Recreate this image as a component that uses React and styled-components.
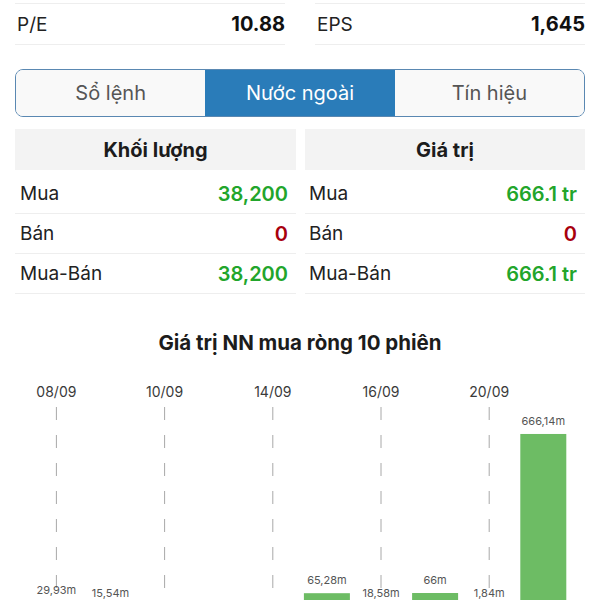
import React from "react";
import styled, { createGlobalStyle } from "styled-components";

const GlobalStyle = createGlobalStyle`
  html, body {
    margin: 0;
    padding: 0;
    background: #ffffff;
    font-family: Inter, "Noto Sans", "Liberation Sans", sans-serif;
    color: #222222;
  }
`;

const Page = styled.div`
  width: 600px;
  height: 600px;
  overflow: hidden;
  padding: 3px 15px 0;
  box-sizing: border-box;
`;

const StatsRow = styled.div`
  display: grid;
  grid-template-columns: 270px 270px;
  column-gap: 30px;
`;

const StatCell = styled.div`
  display: flex;
  align-items: center;
  justify-content: space-between;
  height: 40px;
  padding: 0 0 0 2px;
  border-top: 1px solid #eeeeee;
  border-bottom: 1px solid #eeeeee;
  font-size: 19px;
`;

const StatValue = styled.span`
  font-weight: 700;
  font-size: 20px;
  color: #111111;
`;

const Tabs = styled.div`
  display: grid;
  grid-template-columns: repeat(3, 1fr);
  height: 48px;
  margin-top: 24px;
  border: 1.5px solid #5a88b2;
  border-radius: 8px;
  overflow: hidden;
  box-sizing: border-box;
`;

const Tab = styled.div`
  display: flex;
  align-items: center;
  justify-content: center;
  font-size: 20px;
  color: ${props => (props.active ? "#ffffff" : "#555555")};
  background: ${props => (props.active ? "#2a7cb9" : "#f9f9f9")};
`;

const Tables = styled.div`
  display: grid;
  grid-template-columns: 281px 280px;
  column-gap: 9px;
  margin-top: 12px;
`;

const TableHeader = styled.div`
  display: flex;
  align-items: center;
  justify-content: center;
  height: 41px;
  margin-bottom: 4px;
  background: #f3f3f3;
  font-size: 20px;
  font-weight: 700;
  color: #1c1c1c;
`;

const TableRow = styled.div`
  display: flex;
  align-items: center;
  justify-content: space-between;
  height: 40px;
  padding: 0 8px 0 ${props => props.padLeft || 5}px;
  border-bottom: 1px solid #eeeeee;
  box-sizing: border-box;
  font-size: 19px;
`;

const RowValue = styled.span`
  font-weight: 600;
  font-size: 20px;
  color: ${props => (props.negative ? "#a8000c" : "#22a52b")};
`;

const ChartTitle = styled.div`
  margin-top: 37px;
  text-align: center;
  font-size: 20.5px;
  line-height: 24px;
  font-weight: 700;
  color: #1c1c1c;
`;

const ChartSvg = styled.svg`
  display: block;
  margin-top: 6px;
`;

const stats = [
  { label: "P/E", value: "10.88" },
  { label: "EPS", value: "1,645" }
];

const tables = [
  {
    title: "Khối lượng",
    padLeft: 5,
    rows: [
      { label: "Mua", value: "38,200" },
      { label: "Bán", value: "0", negative: true },
      { label: "Mua-Bán", value: "38,200" }
    ]
  },
  {
    title: "Giá trị",
    padLeft: 4,
    rows: [
      { label: "Mua", value: "666.1 tr" },
      { label: "Bán", value: "0", negative: true },
      { label: "Mua-Bán", value: "666.1 tr" }
    ]
  }
];

// sessions without a value draw nothing above the baseline
const sessions = [
  { date: "08/09", value: 29.93 },
  { date: "09/09", value: 15.54 },
  { date: "10/09", value: null },
  { date: "13/09", value: null },
  { date: "14/09", value: null },
  { date: "15/09", value: 65.28 },
  { date: "16/09", value: 18.58 },
  { date: "17/09", value: 66 },
  { date: "20/09", value: 1.84 },
  { date: "21/09", value: 666.14 }
];

const formatValue = v =>
  `${String(Math.round(v * 100) / 100).replace(".", ",")}m`;

const NetBuyChart = () => {
  const step = 54.1;
  const firstX = 41.4;
  const baseline = 249.5;
  const scale = 0.265;
  const barWidth = 46;

  return (
    <ChartSvg width="570" height="240" viewBox="0 0 570 240">
      {sessions.map((s, i) => {
        if (i % 2) return null;
        const x = firstX + step * i;
        return (
          <g key={s.date}>
            <text
              x={x}
              y={32}
              textAnchor="middle"
              dominantBaseline="middle"
              fontSize="14"
              fill="#3a3a3a"
              fontFamily="Inter, sans-serif"
            >
              {s.date}
            </text>
            <line
              x1={x}
              x2={x}
              y1={46}
              y2={240}
              stroke="#a8a8a8"
              strokeWidth="1"
              strokeDasharray="13 15"
            />
          </g>
        );
      })}
      {sessions.map((s, i) => {
        if (s.value == null) return null;
        const x = firstX + step * i;
        const h = s.value * scale;
        const top = baseline - h;
        return (
          <g key={`bar-${s.date}`}>
            <rect
              x={x - barWidth / 2}
              y={top}
              width={barWidth}
              height={h}
              fill="#6dbc64"
            />
            <text
              x={x}
              y={Math.min(top - 12, 233)}
              textAnchor="middle"
              dominantBaseline="middle"
              fontSize="11"
              fill="#555555"
              fontFamily="Inter, sans-serif"
            >
              {formatValue(s.value)}
            </text>
          </g>
        );
      })}
    </ChartSvg>
  );
};

const App = () => (
  <Page>
    <GlobalStyle />
    <StatsRow>
      {stats.map(s => (
        <StatCell key={s.label}>
          <span>{s.label}</span>
          <StatValue>{s.value}</StatValue>
        </StatCell>
      ))}
    </StatsRow>
    <Tabs>
      <Tab>Sổ lệnh</Tab>
      <Tab active>Nước ngoài</Tab>
      <Tab>Tín hiệu</Tab>
    </Tabs>
    <Tables>
      {tables.map(t => (
        <div key={t.title}>
          <TableHeader>{t.title}</TableHeader>
          {t.rows.map(r => (
            <TableRow key={r.label} padLeft={t.padLeft}>
              <span>{r.label}</span>
              <RowValue negative={r.negative}>{r.value}</RowValue>
            </TableRow>
          ))}
        </div>
      ))}
    </Tables>
    <ChartTitle>Giá trị NN mua ròng 10 phiên</ChartTitle>
    <NetBuyChart />
  </Page>
);

export default App;
